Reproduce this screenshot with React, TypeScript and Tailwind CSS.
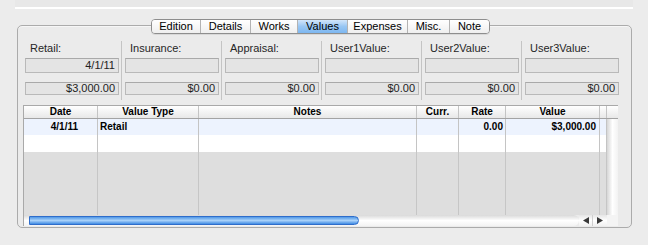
import React from "react";

const tabs = [
  { name: "Edition", w: "w-[48px]" },
  { name: "Details", w: "w-[50px]" },
  { name: "Works", w: "w-[47px]" },
  { name: "Values", w: "w-[50px]", active: true },
  { name: "Expenses", w: "w-[60px]" },
  { name: "Misc.", w: "w-[42px]" },
  { name: "Note", w: "w-[40px]" },
];

const values = [
  { label: "Retail:", date: "4/1/11", amount: "$3,000.00" },
  { label: "Insurance:", date: "", amount: "$0.00" },
  { label: "Appraisal:", date: "", amount: "$0.00" },
  { label: "User1Value:", date: "", amount: "$0.00" },
  { label: "User2Value:", date: "", amount: "$0.00" },
  { label: "User3Value:", date: "", amount: "$0.00" },
];

// column widths include the right divider
const columns = [
  { name: "Date", w: "w-[74px]" },
  { name: "Value Type", w: "w-[101px]" },
  { name: "Notes", w: "w-[218px]" },
  { name: "Curr.", w: "w-[42px]" },
  { name: "Rate", w: "w-[47px]" },
  { name: "Value", w: "w-[94px]" },
  { name: "", w: "w-[7px]" },
];

function Field({ text, h }: { text: string; h: string }) {
  return (
    <div
      className={`${h} w-[94px] border border-[#b9b9b9] border-t-[#a9a9a9] bg-[#e4e4e4] flex items-center justify-end pr-[3px] text-[11px] leading-none text-[#222]`}
    >
      {text}
    </div>
  );
}

export default function App() {
  return (
    <div className="w-[648px] h-[245px] overflow-hidden bg-[#ececec] font-['Liberation_Sans',Arial,sans-serif] text-black">
      {/* Top divider */}
      <div className="mx-[15px] h-[7px] bg-[#e8e8e8]" />
      <div className="mx-[15px] h-[2px] bg-white" />

      {/* Tabs */}
      <div className="relative z-10 mt-[10px] ml-[151px] flex h-[15px] w-[339px] rounded-[4px] border border-[#8e8e8e] overflow-hidden shadow-[0_1px_0_rgba(0,0,0,0.08)]">
        {tabs.map((t, i) => (
          <div
            key={t.name}
            className={`${t.w} ${i > 0 ? "border-l border-[#b3b3b3]" : ""} ${
              t.active
                ? "bg-linear-to-b from-[#d3e6fa] via-[#98c6f3] to-[#7db7f0]"
                : "bg-linear-to-b from-white to-[#efefef]"
            } flex items-center justify-center text-[11px] leading-none`}
          >
            {t.name}
          </div>
        ))}
      </div>

      {/* Panel */}
      <div className="-mt-[9px] ml-[17px] w-[615px] h-[203px] rounded-[5px] border border-[#ababab] bg-[#ebebeb] pt-[15px] pl-[5px] shadow-[inset_0_1px_0_#f6f6f6]">
        {/* Value fields */}
        <div className="ml-[2px] flex">
          {values.map((v, i) => (
            <React.Fragment key={v.label}>
              {i > 0 && <div className="ml-[2px] mr-[3px] w-px bg-[#c4c4c4]" />}
              <div className="flex flex-col pb-[5px]">
                <div className="h-[14px] pl-[5px] text-[11px] leading-[14px] text-[#262626]">{v.label}</div>
                <div className="mt-[3px]">
                  <Field text={v.date} h="h-[15px]" />
                </div>
                <div className="mt-[9px]">
                  <Field text={v.amount} h="h-[13px]" />
                </div>
              </div>
            </React.Fragment>
          ))}
        </div>

        {/* Table */}
        <div className="mt-[5px] w-[595px] h-[121px] border-l border-t border-[#a9a9a9] flex flex-col">
          {/* Header */}
          <div className="flex h-[13px] border-b border-[#a3a3a3] bg-linear-to-b from-white to-[#e8e8e8]">
            {columns.map((c, i) => (
              <div
                key={i}
                className={`${c.w} border-r border-[#c4c4c4] flex items-center justify-center text-[10px] font-bold leading-none`}
              >
                {c.name}
              </div>
            ))}
            <div className="w-[11px]" />
          </div>

          {/* Body */}
          <div className="flex h-[96px]">
            <div className="flex flex-col">
              <div className="flex h-[16px] bg-[#edf3fe] text-[10px] font-bold leading-none">
                <div className="w-[74px] border-r border-[#c4c4c4] flex items-center justify-end pr-[19px]">4/1/11</div>
                <div className="w-[101px] border-r border-[#c4c4c4] flex items-center pl-[2px]">Retail</div>
                <div className="w-[218px] border-r border-[#c4c4c4]" />
                <div className="w-[42px] border-r border-[#c4c4c4]" />
                <div className="w-[47px] border-r border-[#c4c4c4] flex items-center justify-end pr-[2px]">0.00</div>
                <div className="w-[94px] border-r border-[#c4c4c4] flex items-center justify-end pr-[3px]">$3,000.00</div>
                <div className="w-[7px] border-r border-[#c4c4c4]" />
              </div>
              <div className="flex h-[17px] bg-white">
                {columns.map((c, i) => (
                  <div key={i} className={`${c.w} border-r border-[#c4c4c4]`} />
                ))}
              </div>
              <div className="flex flex-1 bg-[#dedede]">
                {columns.map((c, i) => (
                  <div key={i} className={`${c.w} border-r border-[#c6c6c6]`} />
                ))}
              </div>
            </div>
            {/* Vertical scroller track */}
            <div className="w-[11px] bg-linear-to-r from-[#d6d6d6] via-white to-[#f2f2f2]" />
          </div>

          {/* Horizontal scroller */}
          <div className="flex h-[11px]">
            <div className="w-[555px] rounded-r-full bg-linear-to-b from-[#d9d9d9] via-white to-[#f3f3f3] pl-[5px] pt-px">
              <div className="h-[9px] w-[330px] rounded-l-[5px] rounded-r-full border border-[#2e6dcb] bg-linear-to-b from-[#4f98e6] via-[#a8d1f9] to-[#3f8be2]" />
            </div>
            <div className="w-[14px] flex items-center justify-center bg-linear-to-b from-[#e6e6e6] via-white to-[#f1f1f1] border-r border-[#cfcfcf]">
              <svg width="6" height="7" viewBox="0 0 6 7">
                <polygon points="6,0 6,7 0,3.5" fill="#3a3a3a" />
              </svg>
            </div>
            <div className="w-[14px] flex items-center justify-center bg-linear-to-b from-[#e6e6e6] via-white to-[#f1f1f1]">
              <svg width="6" height="7" viewBox="0 0 6 7">
                <polygon points="0,0 0,7 6,3.5" fill="#3a3a3a" />
              </svg>
            </div>
            <div className="w-[11px] bg-[#f4f4f4]" />
          </div>
        </div>
      </div>
    </div>
  );
}
